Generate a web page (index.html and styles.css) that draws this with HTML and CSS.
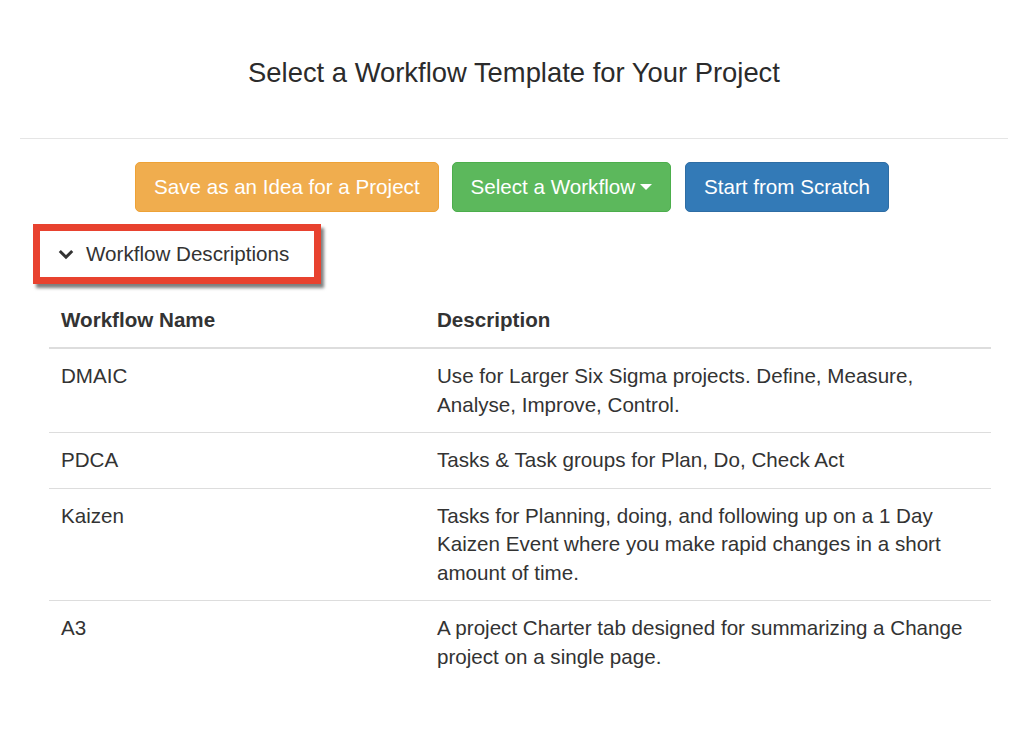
FILE: index.html
```html
<!DOCTYPE html>
<html>
<head>
<meta charset="utf-8">
<link rel="stylesheet" href="styles.css">
</head>
<body>
<div class="modal">
  <div class="modal-header">
    <h4 class="modal-title">Select a Workflow Template for Your Project</h4>
  </div>
  <div class="modal-body">
    <div class="actions">
      <button class="btn btn-warning">Save as an Idea for a Project</button>
      <button class="btn btn-success">Select a Workflow <span class="caret"></span></button>
      <button class="btn btn-primary">Start from Scratch</button>
    </div>
    <div class="toggle-wrap">
      <a class="desc-toggle">
        <svg class="chev" width="16" height="11" viewBox="0 0 16 11"><path d="M1.8 2 L8 8.2 L14.2 2" fill="none" stroke="#333" stroke-width="3"/></svg>
        <span>Workflow Descriptions</span>
      </a>
    </div>
    <table class="wf-table">
      <thead>
        <tr><th class="col-name">Workflow Name</th><th>Description</th></tr>
      </thead>
      <tbody>
        <tr><td>DMAIC</td><td>Use for Larger Six Sigma projects. Define, Measure, Analyse, Improve, Control.</td></tr>
        <tr><td>PDCA</td><td>Tasks &amp; Task groups for Plan, Do, Check Act</td></tr>
        <tr><td>Kaizen</td><td>Tasks for Planning, doing, and following up on a 1 Day Kaizen Event where you make rapid changes in a short amount of time.</td></tr>
        <tr><td>A3</td><td>A project Charter tab designed for summarizing a Change project on a single page.</td></tr>
      </tbody>
    </table>
  </div>
</div>
</body>
</html>
```

FILE: styles.css
```css
html, body {
  margin: 0;
  padding: 0;
  background: #fff;
}
body {
  font-family: "Liberation Sans", Helvetica, Arial, sans-serif;
  color: #333;
  font-size: 20.6px;
  line-height: 28.5px;
}
.modal {
  width: 1024px;
  height: 753px;
  overflow: hidden;
}
.modal-header {
  margin: 0 16px 0 20px;
  padding: 55px 0 47px;
  border-bottom: 1px solid #e5e5e5;
  text-align: center;
}
.modal-title {
  margin: 0;
  font-size: 27.4px;
  line-height: 36px;
  font-weight: 400;
  color: #2b2b2b;
}
.modal-body {
  padding-top: 23px;
}
.actions {
  display: flex;
  justify-content: center;
  gap: 13px;
}
.btn {
  font-family: inherit;
  font-size: 20.6px;
  line-height: 28px;
  padding: 10px 18px;
  border: 1px solid transparent;
  border-radius: 5px;
  color: #fff;
  cursor: pointer;
  display: inline-flex;
  align-items: center;
}
.btn-warning {
  background: #f0ad4e;
  border-color: #eea236;
}
.btn-success {
  background: #5cb85c;
  border-color: #4cae4c;
}
.btn-primary {
  background: #337ab7;
  border-color: #2e6da4;
  margin-left: 1px;
}
.caret {
  display: inline-block;
  width: 0;
  height: 0;
  margin-left: 5px;
  border-top: 6px solid #fff;
  border-left: 6px solid transparent;
  border-right: 6px solid transparent;
}
.toggle-wrap {
  margin: 12px 0 0 33px;
}
.desc-toggle {
  display: inline-flex;
  align-items: center;
  gap: 12px;
  border: 7px solid #e8422f;
  padding: 9px 25px 8px 18px;
  box-shadow: 3px 4px 3px rgba(0, 0, 0, 0.5);
  color: #333;
  text-decoration: none;
}
.chev {
  display: block;
}
.wf-table {
  margin: 9px 0 0 49px;
  width: 942px;
  border-collapse: collapse;
}
.wf-table th,
.wf-table td {
  padding: 13px 12px;
  text-align: left;
  vertical-align: top;
}
.wf-table th {
  font-weight: 700;
  border-bottom: 2px solid #ddd;
}
.col-name {
  width: 352px;
}
.wf-table tbody tr + tr td {
  border-top: 1px solid #ddd;
}
```
